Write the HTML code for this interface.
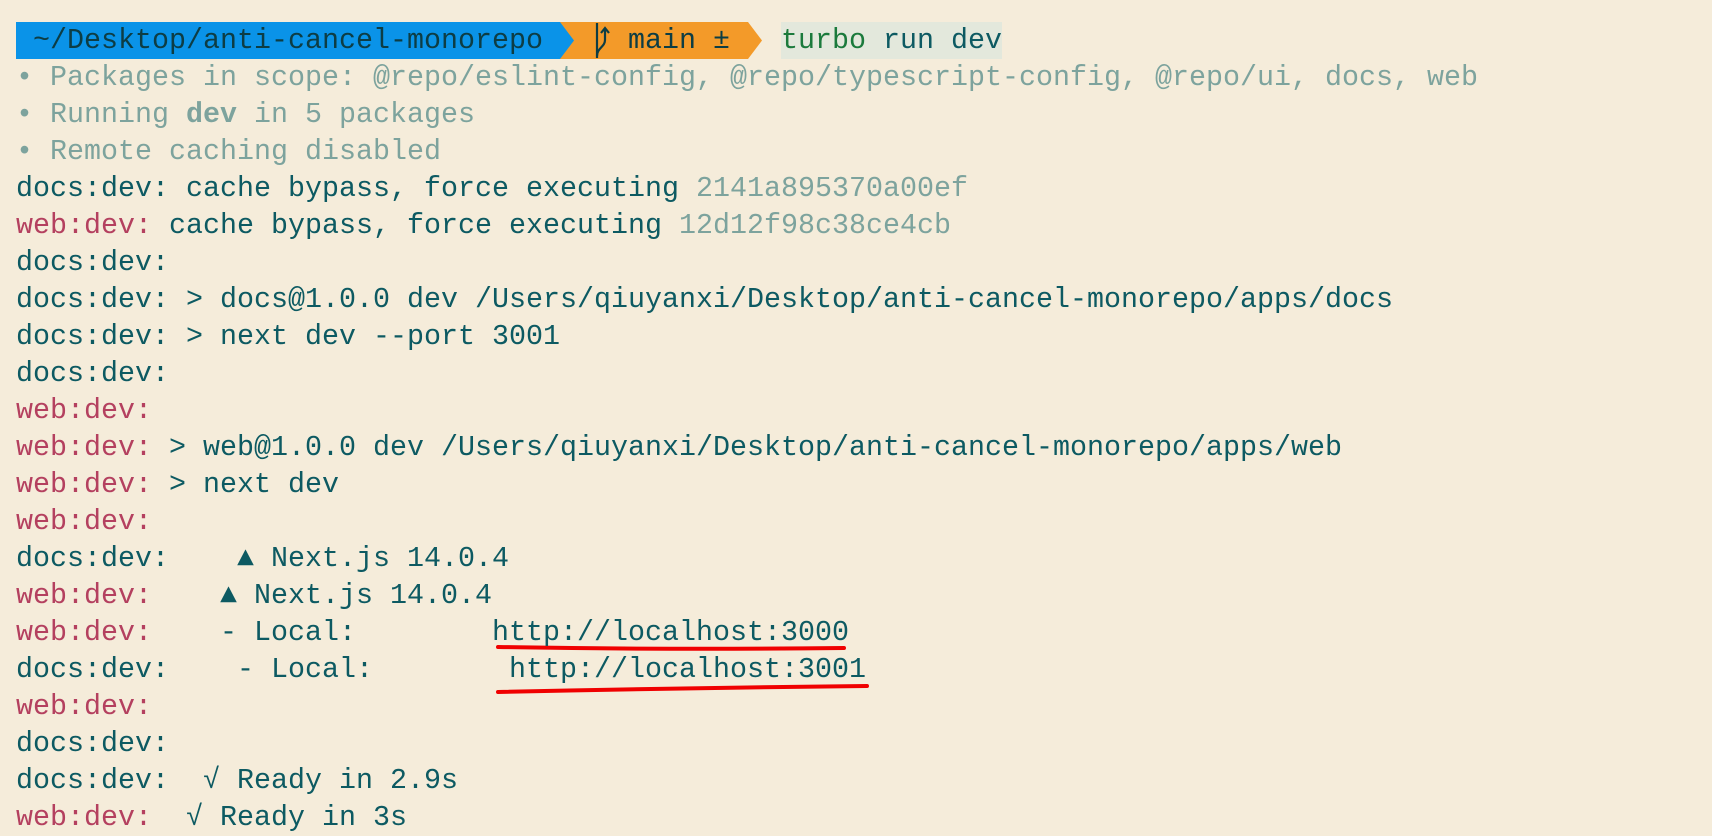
<!DOCTYPE html>
<html><head><meta charset="utf-8"><style>
html,body{margin:0;padding:0;}
body{width:1712px;height:834px;background:#f5ecda;position:relative;overflow:hidden;font-family:"Liberation Mono",monospace;font-size:28.33px;}
.l{position:absolute;left:16px;height:37px;line-height:37px;white-space:pre;color:#0d5a62;}
.p{color:#b4405f}.g{color:#7da39d}.d{color:#0d5a62}
</style></head><body>
<svg width="1712" height="834" style="position:absolute;left:0;top:0">
<rect x="16" y="22" width="546" height="37" fill="#0a93e8"/>
<polygon points="560,22 748,22 762,40.5 748,59 560,59" fill="#f39a29"/>
<polygon points="560,22 574,40.5 560,59" fill="#0a93e8"/>
<rect x="781" y="22" width="221" height="37" fill="#e3e8dc"/>
<line x1="597" y1="23" x2="597" y2="58" stroke="#0d3d44" stroke-width="2.2"/>
<path d="M597 56 C597 48 605 47 605 40 L605 29 M601 33 L605 28 L609 33" fill="none" stroke="#0d3d44" stroke-width="2.2"/>
<path d="M498 647 Q670 650 844 648" stroke="#f00000" stroke-width="4" fill="none" stroke-linecap="round"/>
<path d="M498 692 Q680 688 867 686" stroke="#f00000" stroke-width="4" fill="none" stroke-linecap="round"/>
</svg>
<div class="l" style="top:21.5px;color:#0d3d44"> ~/Desktop/anti-cancel-monorepo     main ±   <span style="color:#1b7a3c">turbo</span><span style="color:#0d5a62"> run dev</span></div>
<div class="l g" style="top:58.5px">• Packages in scope: @repo/eslint-config, @repo/typescript-config, @repo/ui, docs, web</div>
<div class="l g" style="top:95.5px">• Running <b>dev</b> in 5 packages</div>
<div class="l g" style="top:132.5px">• Remote caching disabled</div>
<div class="l" style="top:169.5px">docs:dev: cache bypass, force executing <span class="g">2141a895370a00ef</span></div>
<div class="l" style="top:206.5px"><span class="p">web:dev:</span> cache bypass, force executing <span class="g">12d12f98c38ce4cb</span></div>
<div class="l" style="top:243.5px">docs:dev:</div>
<div class="l" style="top:280.5px">docs:dev: &gt; docs@1.0.0 dev /Users/qiuyanxi/Desktop/anti-cancel-monorepo/apps/docs</div>
<div class="l" style="top:317.5px">docs:dev: &gt; next dev --port 3001</div>
<div class="l" style="top:354.5px">docs:dev:</div>
<div class="l p" style="top:391.5px">web:dev:</div>
<div class="l" style="top:428.5px"><span class="p">web:dev:</span> &gt; web@1.0.0 dev /Users/qiuyanxi/Desktop/anti-cancel-monorepo/apps/web</div>
<div class="l" style="top:465.5px"><span class="p">web:dev:</span> &gt; next dev</div>
<div class="l p" style="top:502.5px">web:dev:</div>
<div class="l" style="top:539.5px">docs:dev:    ▲ Next.js 14.0.4</div>
<div class="l" style="top:576.5px"><span class="p">web:dev:</span>    ▲ Next.js 14.0.4</div>
<div class="l" style="top:613.5px"><span class="p">web:dev:</span>    - Local:        http://localhost:3000</div>
<div class="l" style="top:650.5px">docs:dev:    - Local:        http://localhost:3001</div>
<div class="l p" style="top:687.5px">web:dev:</div>
<div class="l" style="top:724.5px">docs:dev:</div>
<div class="l" style="top:761.5px">docs:dev:  √ Ready in 2.9s</div>
<div class="l" style="top:798.5px"><span class="p">web:dev:</span>  √ Ready in 3s</div>
</body></html>
